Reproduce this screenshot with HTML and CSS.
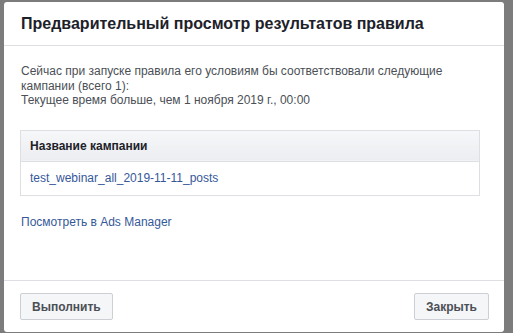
FILE: index.html
```html
<!DOCTYPE html>
<html lang="ru">
<head>
<meta charset="utf-8">
<link rel="stylesheet" href="styles.css">
</head>
<body>
<div class="dialog">
  <div class="dialog-header">
    <h2 class="dialog-title">Предварительный просмотр результатов правила</h2>
  </div>
  <div class="dialog-body">
    <p class="intro">Сейчас при запуске правила его условиям бы соответствовали следующие кампании (всего 1):<br>Текущее время больше, чем 1 ноября 2019 г., 00:00</p>
    <table class="results">
      <thead>
        <tr><th>Название кампании</th></tr>
      </thead>
      <tbody>
        <tr><td><a href="#" class="link">test_webinar_all_2019-11-11_posts</a></td></tr>
      </tbody>
    </table>
    <a href="#" class="link manager-link">Посмотреть в Ads Manager</a>
  </div>
  <div class="dialog-footer">
    <button class="btn">Выполнить</button>
    <button class="btn">Закрыть</button>
  </div>
</div>
</body>
</html>
```

FILE: styles.css
```css
html, body {
  margin: 0;
  padding: 0;
}
body {
  background: #7c7c7c;
  font-family: "Liberation Sans", Arial, sans-serif;
  width: 513px;
  height: 333px;
  overflow: hidden;
}
.dialog {
  margin: 2px 0 0 4px;
  width: 500px;
  height: 330px;
  background: #fff;
  border-radius: 3px;
  display: flex;
  flex-direction: column;
  box-sizing: border-box;
}
.dialog-header {
  height: 43px;
  border-bottom: 1px solid #dddfe2;
  display: flex;
  align-items: center;
  padding: 0 17px;
  flex-shrink: 0;
}
.dialog-title {
  margin: 0;
  font-size: 16px;
  font-weight: bold;
  color: #1d2129;
}
.dialog-body {
  flex: 1;
  padding: 18px 16px 0 17px;
}
.intro {
  margin: 0;
  font-size: 12px;
  line-height: 14.5px;
  color: #4b4f56;
}
.results {
  margin: 22px 0 0 -1px;
  width: 460px;
  border-collapse: collapse;
  border: 1px solid #dddfe2;
}
.results th {
  height: 30px;
  padding: 0 9px;
  text-align: left;
  font-size: 12px;
  font-weight: bold;
  color: #1d2129;
  background: linear-gradient(#f6f7f9, #ebedf0);
  border-bottom: 1px solid #dddfe2;
}
.results td {
  height: 33px;
  padding: 0 9px;
  font-size: 12px;
}
.link {
  color: #365899;
  text-decoration: none;
  font-size: 12px;
}
.manager-link {
  display: inline-block;
  margin-top: 19px;
}
.dialog-footer {
  border-top: 1px solid #dddfe2;
  padding: 12px 15px 12px 16px;
  display: flex;
  justify-content: space-between;
  flex-shrink: 0;
}
.btn {
  height: 27px;
  padding: 0 11px;
  background: #f5f6f7;
  border: 1px solid #ccd0d5;
  border-radius: 2px;
  font-family: "Liberation Sans", Arial, sans-serif;
  font-size: 12px;
  font-weight: bold;
  color: #4b4f56;
}
```
